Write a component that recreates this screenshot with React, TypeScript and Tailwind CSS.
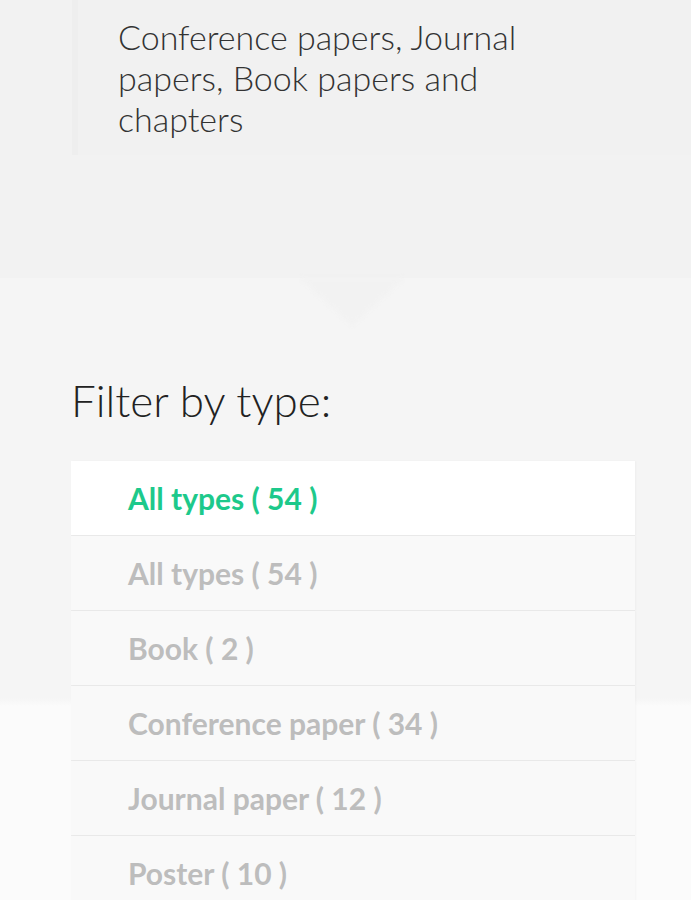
const types = [
  { label: "All types", count: 54, active: true },
  { label: "All types", count: 54 },
  { label: "Book", count: 2 },
  { label: "Conference paper", count: 34 },
  { label: "Journal paper", count: 12 },
  { label: "Poster", count: 10 },
];

export default function App() {
  return (
    <div className="h-[900px] w-full overflow-hidden font-['Lato','Noto_Sans',sans-serif] bg-[#fbfbfb]">
      {/* Intro block */}
      <section className="relative h-[278px] bg-[#f2f2f2]">
        <div className="ml-[72px] border-l-[6px] border-[#eeeeee] bg-[#f1f1f1] pl-[40px] pt-[16px] pb-[16px]">
          <p className="max-w-[430px] text-[34px] leading-[41px] font-light text-[#333333]">
            Conference papers, Journal papers, Book papers and chapters
          </p>
        </div>
        <div className="absolute left-[300px] top-full h-0 w-0 border-l-[52px] border-r-[52px] border-t-[48px] border-l-transparent border-r-transparent border-t-[#f2f2f2] blur-[2px]" />
      </section>

      {/* Filter */}
      <section className="bg-[linear-gradient(to_bottom,#f5f5f5_0,#f5f5f5_420px,#fbfbfb_428px)] px-[71px] pt-[96px] pb-10">
        <h2 className="text-[44px] leading-[52px] font-light text-[#222222]">Filter by type:</h2>
        <ul className="mt-[35px] w-[564px]">
          {types.map((t, i) => (
            <li
              key={i}
              className={`flex h-[75px] items-center border-b border-[#ebebeb] pl-[57px] text-[30px] font-bold shadow-[1px_0_2px_rgba(0,0,0,0.03)] ${
                t.active ? "bg-white text-[#1dc98b]" : "bg-[#f9f9f9] text-[#bdbdbd]"
              }`}
            >
              {t.label} ( {t.count} )
            </li>
          ))}
        </ul>
      </section>
    </div>
  );
}
